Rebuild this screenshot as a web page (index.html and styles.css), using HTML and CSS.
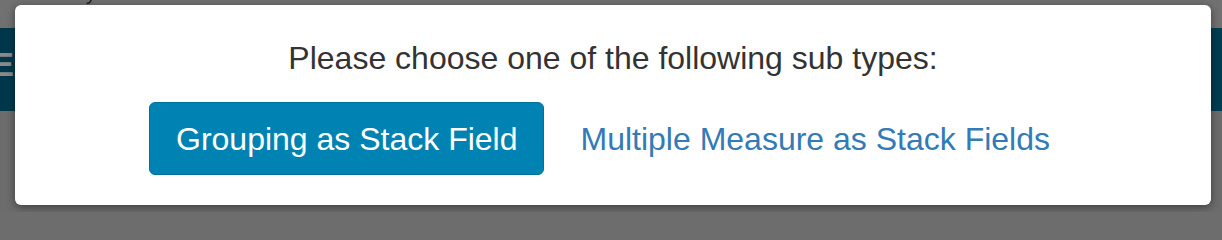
FILE: index.html
```html
<!DOCTYPE html>
<html>
<head>
<meta charset="utf-8">
<link rel="stylesheet" href="styles.css">
</head>
<body>
<div class="page">
  <div class="topbar"><span class="title">y</span></div>
  <div class="navbar"><span class="brand">Ex</span></div>
  <div class="rest"></div>
</div>
<div class="modal">
  <p class="prompt">Please choose one of the following sub types:</p>
  <div class="choices">
    <button class="btn btn-primary">Grouping as Stack Field</button>
    <a class="btn btn-link" href="#">Multiple Measure as Stack Fields</a>
  </div>
</div>
</body>
</html>
```

FILE: styles.css
```css
html, body {
  margin: 0;
  padding: 0;
}
body {
  width: 1222px;
  height: 212px;
  overflow: hidden;
  position: relative;
  background: #6d6d6d;
  font-family: "Liberation Sans", Arial, Helvetica, sans-serif;
}
.page {
  display: flex;
  flex-direction: column;
  height: 212px;
}
.topbar {
  height: 28px;
  background: #717171;
  overflow: hidden;
}
.title {
  display: block;
  margin: -17px 0 0 86px;
  font-size: 20px;
  line-height: 20px;
  color: #1c1c1c;
}
.navbar {
  height: 83px;
  background: linear-gradient(90deg, #01364a, #033d52 30px, #033d52);
  overflow: hidden;
}
.brand {
  display: block;
  margin: 17px 0 0 -8px;
  font-size: 33px;
  line-height: 40px;
  font-weight: bold;
  color: #8a8a8a;
}
.rest {
  flex: 1;
  background: #6c6c6c;
}
.modal {
  position: absolute;
  left: 15px;
  top: 5px;
  width: 1196px;
  box-sizing: border-box;
  background: #fff;
  border-radius: 6px;
  box-shadow: 0 2px 8px rgba(0, 0, 0, 0.45);
  padding: 35px 0 30px;
  text-align: center;
}
.prompt {
  margin: 0;
  font-size: 32px;
  line-height: 36px;
  color: #333;
}
.choices {
  margin-top: 26px;
  display: flex;
  justify-content: center;
  gap: 9px;
}
.btn {
  display: inline-block;
  box-sizing: border-box;
  height: 73px;
  padding: 18px 26px 17px;
  border: 1px solid transparent;
  border-radius: 6px;
  font-family: inherit;
  font-size: 32px;
  line-height: 36px;
  text-decoration: none;
  cursor: pointer;
}
.btn-primary {
  background: #0083b3;
  border-color: #00719c;
  color: #fff;
}
.btn-link {
  background: transparent;
  color: #337ab7;
}
```
